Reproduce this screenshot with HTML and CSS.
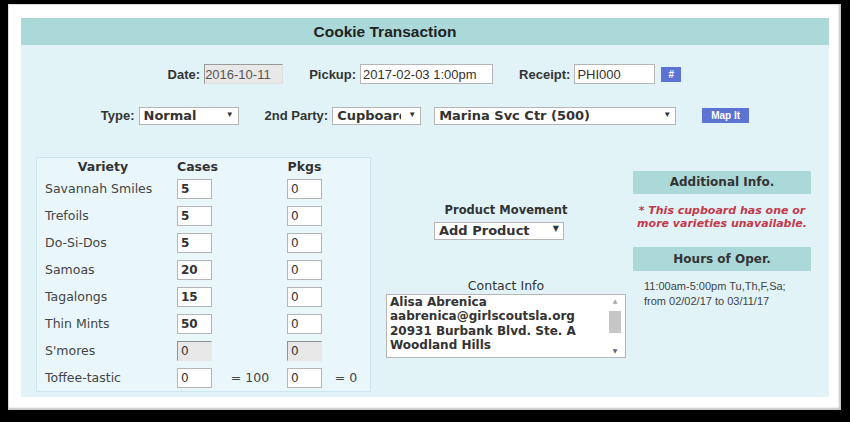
FILE: index.html
```html
<!DOCTYPE html>
<html lang="en">
<head>
    <meta charset="UTF-8">
    <meta name="viewport" content="width=device-width, initial-scale=1.0">
    <title>Cookie Transaction</title>
    <link rel="stylesheet" href="styles.css">
</head>
<body>
    <div class="frame">
        <form class="panel" id="transakcja">
            <div class="title">Cookie Transaction</div>

            <div class="row row-top">
                <label for="data">Date:</label>
                <input type="text" id="data" class="field field-date" value="2016-10-11" disabled>
                <label for="odbior" class="gap">Pickup:</label>
                <input type="text" id="odbior" class="field field-pickup" value="2017-02-03 1:00pm">
                <label for="paragon" class="gap">Receipt:</label>
                <input type="text" id="paragon" class="field field-receipt" value="PHI000">
                <button type="button" class="btn btn-hash">#</button>
            </div>

            <div class="row row-party">
                <label for="typ">Type:</label>
                <span class="pick pick-type">
                    <select id="typ"><option>Normal</option><option>Booth</option></select>
                </span>
                <label for="strona" class="gap">2nd Party:</label>
                <span class="pick pick-party">
                    <select id="strona"><option>Cupboard</option><option>Troop</option></select>
                </span>
                <span class="pick pick-place">
                    <select id="miejsce"><option>Marina Svc Ctr (500)</option></select>
                </span>
                <button type="button" class="btn btn-map">Map It</button>
            </div>

            <div class="lower">
                <div class="varieties">
                    <div class="head head-name">Variety</div>
                    <div class="head">Cases</div>
                    <div></div>
                    <div class="head">Pkgs</div>
                    <div></div>

                    <div class="name">Savannah Smiles</div>
                    <input type="text" class="qty filled" value="5">
                    <div></div>
                    <input type="text" class="qty" value="0">
                    <div></div>

                    <div class="name">Trefoils</div>
                    <input type="text" class="qty filled" value="5">
                    <div></div>
                    <input type="text" class="qty" value="0">
                    <div></div>

                    <div class="name">Do-Si-Dos</div>
                    <input type="text" class="qty filled" value="5">
                    <div></div>
                    <input type="text" class="qty" value="0">
                    <div></div>

                    <div class="name">Samoas</div>
                    <input type="text" class="qty filled" value="20">
                    <div></div>
                    <input type="text" class="qty" value="0">
                    <div></div>

                    <div class="name">Tagalongs</div>
                    <input type="text" class="qty filled" value="15">
                    <div></div>
                    <input type="text" class="qty" value="0">
                    <div></div>

                    <div class="name">Thin Mints</div>
                    <input type="text" class="qty filled" value="50">
                    <div></div>
                    <input type="text" class="qty" value="0">
                    <div></div>

                    <div class="name">S'mores</div>
                    <input type="text" class="qty" value="0" disabled>
                    <div></div>
                    <input type="text" class="qty" value="0" disabled>
                    <div></div>

                    <div class="name">Toffee-tastic</div>
                    <input type="text" class="qty" value="0">
                    <div class="sum">= 100</div>
                    <input type="text" class="qty" value="0">
                    <div class="sum">= 0</div>
                </div>

                <div class="movement">
                    <div class="sub-title">Product Movement</div>
                    <span class="pick pick-move">
                        <select id="ruch"><option>Add Product</option><option>Return Product</option></select>
                    </span>
                    <div class="contact-title">Contact Info</div>
                    <div class="contact-box">
                        <textarea class="contact" readonly>Alisa Abrenica
aabrenica@girlscoutsla.org
20931 Burbank Blvd. Ste. A
Woodland Hills</textarea>
                        <div class="scroll">
                            <span class="arrow arrow-up">&#9650;</span>
                            <span class="track"><span class="thumb"></span></span>
                            <span class="arrow arrow-down">&#9660;</span>
                        </div>
                    </div>
                </div>

                <div class="info">
                    <div class="bar">Additional Info.</div>
                    <p class="note">* This cupboard has one or more varieties unavailable.</p>
                    <div class="bar bar-hours">Hours of Oper.</div>
                    <p class="hours">11:00am-5:00pm Tu,Th,F,Sa;<br>from 02/02/17 to 03/11/17</p>
                </div>
            </div>
        </form>
    </div>
</body>
</html>
```

FILE: styles.css
```css
body {
    margin: 0;
    background-color: #000;
    height: 422px;
    overflow: hidden;
    font-family: "DejaVu Sans", Verdana, sans-serif;
    color: #333;
}

.frame {
    margin: 4px 0 0 8px;
    width: 833px;
    height: 406px;
    box-sizing: border-box;
    padding: 14px 12px 13px 13px;
    background-color: #fff;
    box-shadow: inset -2px -2px 2px #c4c4c4, inset 1px 1px 1px #d8d8d8;
}

.panel {
    display: flex;
    flex-direction: column;
    height: 379px;
    margin: 0;
    background-color: #e1f3f7;
}

.title {
    height: 27px;
    line-height: 27px;
    padding-right: 80px;
    background-color: #abd9da;
    text-align: center;
    font-family: "Liberation Sans", Arial, sans-serif;
    font-size: 15.5px;
    font-weight: bold;
    color: #222;
}

.row {
    display: flex;
    align-items: center;
    justify-content: center;
    font-family: "Liberation Sans", Arial, sans-serif;
}

.row label {
    font-size: 13px;
    font-weight: bold;
    color: #333;
    margin-right: 4px;
}

.row label.gap {
    margin-left: 26px;
}

.row-top {
    margin-top: 19px;
    height: 20px;
    padding-right: 1px;
}

.row-party {
    margin-top: 22px;
    height: 18px;
}

.field {
    box-sizing: border-box;
    height: 20px;
    padding: 0 2px;
    border: 1px solid #b5b5b5;
    background-color: #fff;
    font-family: "Liberation Sans", Arial, sans-serif;
    font-size: 13px;
    color: #333;
}

.field:disabled {
    padding-left: 0;
    background-color: #e8e8e8;
    border-color: #9a9a9a #e0e0e0 #e0e0e0 #9a9a9a;
    color: #555;
}

.field-date {
    width: 79px;
}

.field-pickup {
    width: 133px;
}

.field-receipt {
    width: 81px;
}

.btn {
    box-sizing: border-box;
    height: 15px;
    padding: 0;
    border: none;
    background-color: #5c73d4;
    color: #fff;
    font-family: "Liberation Sans", Arial, sans-serif;
    font-size: 10px;
    font-weight: bold;
    cursor: pointer;
}

.btn-hash {
    width: 20px;
    margin-left: 6px;
}

.btn-map {
    width: 47px;
    margin-left: 26px;
}

.pick {
    position: relative;
    display: inline-block;
}

.pick select {
    appearance: none;
    -webkit-appearance: none;
    box-sizing: border-box;
    width: 100%;
    height: 18px;
    margin: 0;
    padding: 0 14px 0 4px;
    border: 1px solid #b5b5b5;
    border-radius: 0;
    background-color: #fff;
    font-family: "DejaVu Sans", Verdana, sans-serif;
    font-size: 13px;
    font-weight: bold;
    color: #333;
}

.pick::after {
    content: "\25BC";
    position: absolute;
    right: 5px;
    top: 4px;
    font-size: 8px;
    color: #333;
    pointer-events: none;
}

.pick-type {
    width: 100px;
    height: 18px;
}

.pick-party {
    width: 89px;
    height: 18px;
}

.pick-party select {
    padding-right: 19px;
}

.pick-place {
    width: 242px;
    height: 18px;
    margin-left: 13px;
}

.pick-move {
    width: 130px;
    height: 18px;
    margin: 2px 0 0 48px;
}

.lower {
    display: flex;
    align-items: flex-start;
    margin-top: 33px;
    padding-left: 15px;
}

.varieties {
    display: grid;
    grid-template-columns: 132px 36px 74px 35px 1fr;
    grid-template-rows: 17px;
    grid-auto-rows: 27px;
    align-items: center;
    width: 335px;
    box-sizing: border-box;
    padding-left: 8px;
    border: 1px solid #cbe6ef;
    background-color: #e9f7fb;
    font-size: 12.5px;
}

.head {
    text-align: center;
    font-weight: bold;
    color: #333;
    line-height: 17px;
}

.head-name {
    padding-right: 16px;
}

.name {
    color: #444;
}

.qty {
    box-sizing: border-box;
    width: 35px;
    height: 20px;
    padding: 0 3px;
    border: 1px solid #b5b5b5;
    background-color: #fff;
    font-family: "DejaVu Sans", Verdana, sans-serif;
    font-size: 12px;
    color: #333;
}

.qty.filled {
    font-weight: bold;
}

.qty:disabled {
    background-color: #e8e8e8;
    border-color: #8f8f8f #e8e8e8 #e8e8e8 #8f8f8f;
}

.sum {
    text-align: center;
    color: #444;
}

.movement {
    display: flex;
    flex-direction: column;
    width: 240px;
    margin-left: 15px;
    padding-top: 45px;
}

.sub-title {
    text-align: center;
    font-size: 11.5px;
    font-weight: bold;
    line-height: 16px;
    color: #333;
}

.contact-title {
    margin-top: 40px;
    text-align: center;
    font-size: 12.5px;
    line-height: 16px;
    color: #333;
}

.contact-box {
    display: flex;
    box-sizing: border-box;
    width: 240px;
    height: 64px;
    border: 1px solid #b5b5b5;
    background-color: #fff;
}

.contact {
    flex: 1;
    min-width: 0;
    margin: 0;
    padding: 0 3px;
    border: none;
    resize: none;
    overflow: hidden;
    white-space: pre;
    font-family: "DejaVu Sans", Verdana, sans-serif;
    font-size: 12px;
    font-weight: bold;
    line-height: 14.3px;
    color: #333;
}

.scroll {
    display: flex;
    flex-direction: column;
    width: 12px;
    margin-right: 4px;
}

.arrow {
    height: 12px;
    line-height: 12px;
    text-align: center;
    font-size: 6px;
}

.arrow-up {
    color: #aaa;
}

.arrow-down {
    color: #666;
}

.track {
    flex: 1;
    padding-top: 4px;
}

.thumb {
    display: block;
    height: 22px;
    background-color: #c6c6c6;
}

.info {
    width: 178px;
    margin-left: 7px;
    padding-top: 14px;
}

.bar {
    height: 23px;
    line-height: 23px;
    background-color: #abd9da;
    text-align: center;
    font-size: 12px;
    font-weight: bold;
    color: #333;
}

.bar-hours {
    height: 24px;
    line-height: 24px;
    margin-top: 17px;
}

.note {
    margin: 10px 0 0 0;
    text-align: center;
    font-size: 11px;
    font-weight: bold;
    font-style: italic;
    line-height: 13px;
    color: #c3394a;
}

.hours {
    margin: 8px 0 0 11px;
    font-family: "Liberation Sans", Arial, sans-serif;
    font-size: 11px;
    line-height: 15px;
    color: #444;
}
```
